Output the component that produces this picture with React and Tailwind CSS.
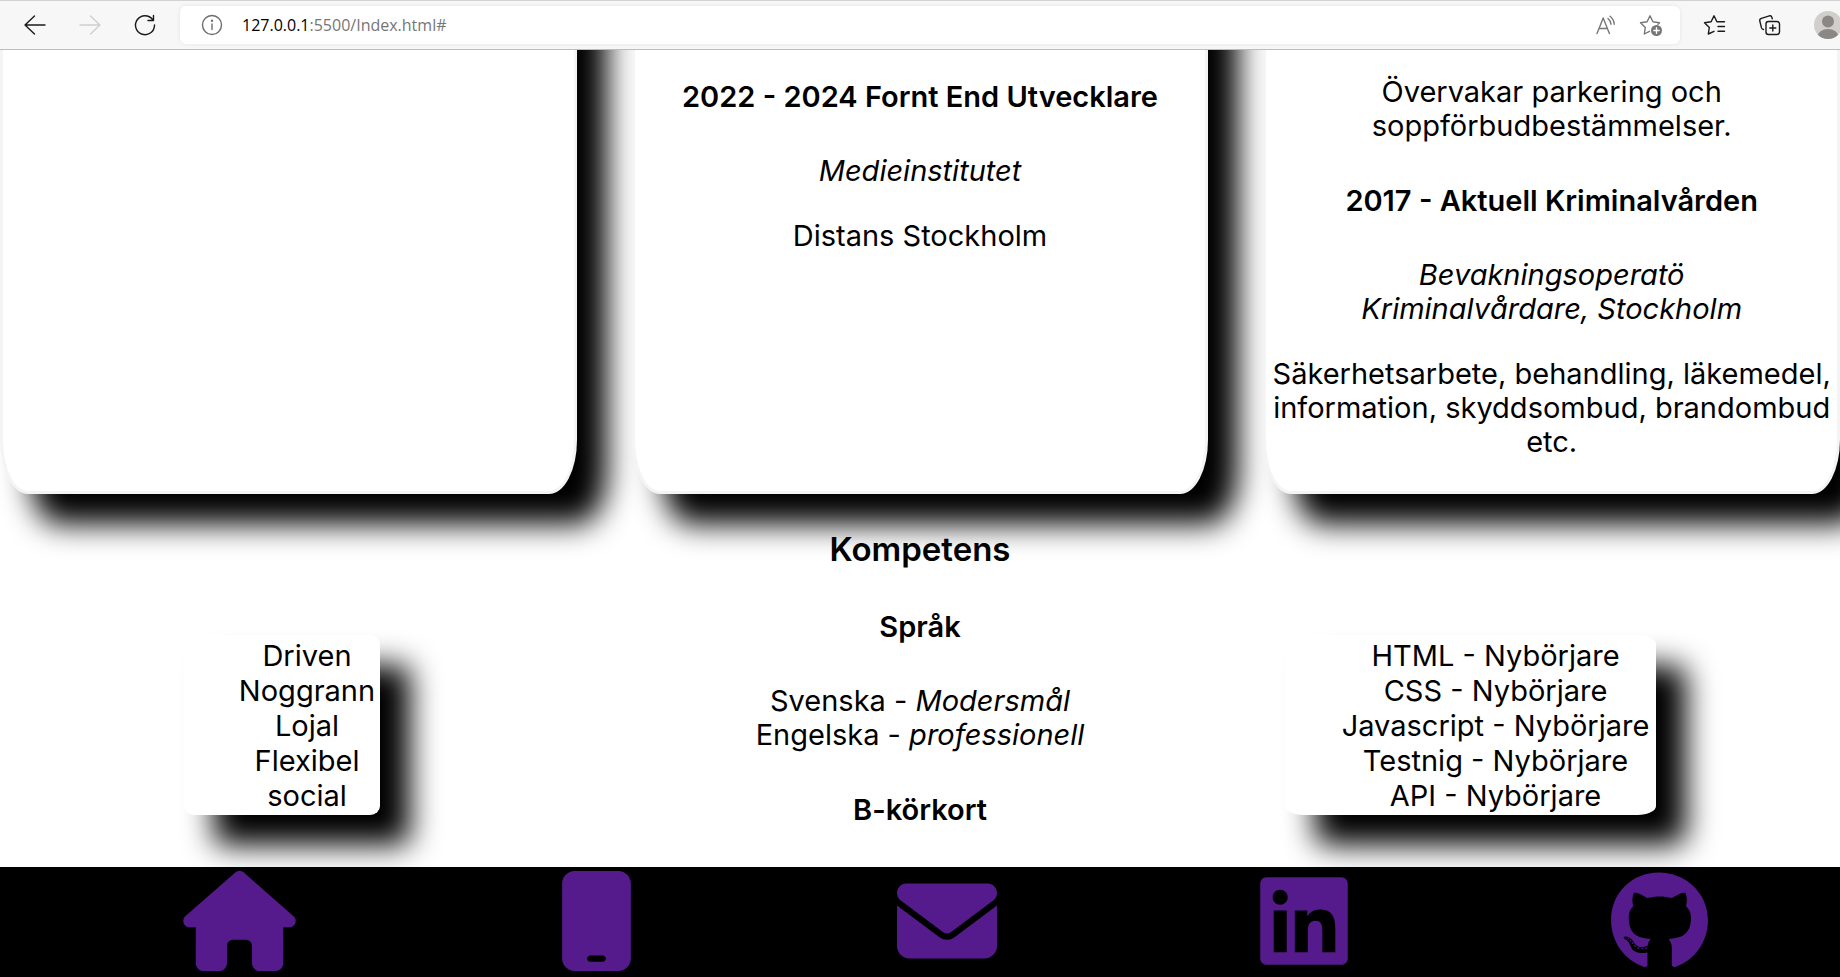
import React from "react";
import { FaHouse, FaEnvelope, FaLinkedin, FaGithub } from "react-icons/fa6";

function Svg({ label, className, children }) {
  return (
    <svg
      viewBox="0 0 24 24"
      role="img"
      aria-label={label}
      className={className}
      fill="none"
      stroke="currentColor"
      strokeWidth="1.4"
      strokeLinecap="round"
      strokeLinejoin="round"
    >
      {children}
    </svg>
  );
}

function BrowserBar() {
  return (
    <header className="relative z-10 flex h-[50px] shrink-0 items-center overflow-hidden border-t border-b border-t-[#d2d2d2] border-b-[#bcbcbc] bg-[#f7f7f7] pl-[23px] font-['Open_Sans',sans-serif]">
      <div className="flex shrink-0 items-center gap-[31px]">
        <button type="button" aria-label="Back" className="text-[#1a1a1a]">
          <Svg className="size-6">
            <path d="M22 12H2M11.500 3 2 12l9.500 9" />
          </Svg>
        </button>
        <button type="button" aria-label="Forward" className="text-[#cfcfcf]">
          <Svg className="size-6">
            <path d="M2 12h20M12.500 3 22 12l-9.500 9" />
          </Svg>
        </button>
        <button type="button" aria-label="Reload" className="text-[#1a1a1a]">
          <Svg className="size-6">
            <path d="M19.600 6.500A9.500 9.500 0 1 0 21.500 12M20.500 2.500V7.500H15" />
          </Svg>
        </button>
      </div>
      <div className="ml-[23px] flex h-[38px] min-w-0 flex-1 items-center rounded-md bg-white pr-[17px] pl-5 shadow-[0_0_4px_rgba(0,0,0,0.08)]">
        <button type="button" aria-label="Site information" className="text-[#6e6e6e]">
          <Svg className="size-6">
            <circle cx="12" cy="12" r="9.500" />
            <path d="M12 11v5.500" />
            <circle cx="12" cy="7.800" r="0.500" fill="currentColor" />
          </Svg>
        </button>
        <a href="#" className="ml-[18px] flex-1 text-base text-[#767676]">
          <span className="text-black">127.0.0.1</span>:5500/Index.html#
        </a>
        <div className="flex items-center gap-[21px] text-[#767676]">
          <button type="button" aria-label="Read aloud">
            <Svg className="size-6">
              <path d="M3 20.500 9.200 5l6.200 15.500M5.200 15.500h8M14 5.500c1.800 1.400 2.800 3.400 3 5.800M16 3.200c2.600 2 4 4.800 4.200 8" />
            </Svg>
          </button>
          <button type="button" aria-label="Add to favourites">
            <Svg className="size-6">
              <path d="M10.500 18.300 5.300 21l1-6.500L1.500 9.800l6.600-1L11 2.800l2.900 6 6.600 1-1.500 1.500" />
              <circle cx="17.500" cy="17.500" r="5.500" fill="currentColor" stroke="none" />
              <path d="M17.500 14.800v5.400M14.800 17.500h5.400" stroke="white" />
            </Svg>
          </button>
        </div>
      </div>
      <div className="-mr-[2px] ml-[23px] flex shrink-0 items-center text-[#1a1a1a]">
        <button type="button" aria-label="Favourites">
          <Svg className="size-6">
            <path d="M11 18.300 5.300 21l1-6.500L1.500 9.800l6.600-1L11 2.800l2.900 6H21.500M15 13.500h6.500M15 18.200h6.500" />
          </Svg>
        </button>
        <button type="button" aria-label="Collections" className="ml-[31px]">
          <Svg className="size-6">
            <rect x="8" y="8.500" width="13.500" height="13" rx="2.500" />
            <path d="M14.800 12v6M11.800 15h6M5.500 16.500c-1 0-1.700-.6-2-1.600L1.800 8c-.3-1.300.3-2.300 1.600-2.700l8-2.500c1.300-.3 2.200.3 2.500 1.500l.4 1.500" />
          </Svg>
        </button>
        <button type="button" aria-label="Profile" className="ml-8">
          <svg viewBox="0 0 28 28" className="size-7">
            <clipPath id="avatar">
              <circle cx="14" cy="14" r="14" />
            </clipPath>
            <g clipPath="url(#avatar)">
              <rect width="28" height="28" fill="#d0cfcc" />
              <circle cx="14" cy="10.500" r="6" fill="#8a8784" />
              <ellipse cx="14" cy="26" rx="10.500" ry="8" fill="#8a8784" />
            </g>
          </svg>
        </button>
      </div>
    </header>
  );
}

function Card({ className = "", children }) {
  return (
    <article
      className={
        "border-3 border-t-0 border-[#f4f4f4] bg-white shadow-[30px_30px_30px_#000] [border-radius:0_0_28px_28px/0_0_54px_54px] " +
        className
      }
    >
      {children}
    </article>
  );
}

function SkillList({ items, className }) {
  return (
    <ul
      className={
        "relative rounded-[5%] bg-white pt-[3px] pr-1 pb-[2px] pl-[54px] leading-[35px] whitespace-nowrap shadow-[30px_30px_30px_#000] " +
        className
      }
    >
      {items.map((item) => (
        <li key={item} className="flex justify-center">
          {item}
        </li>
      ))}
    </ul>
  );
}

function MobileIcon() {
  return (
    <svg viewBox="0 0 384 512" fill="currentColor" className="h-[100px] w-[75px]">
      <path d="M80 0C44.700 0 16 28.700 16 64V448c0 35.300 28.700 64 64 64H304c35.300 0 64-28.700 64-64V64c0-35.300-28.700-64-64-64H80zm80 432h64c8.800 0 16 7.200 16 16s-7.200 16-16 16H160c-8.800 0-16-7.200-16-16s7.200-16 16-16z" />
    </svg>
  );
}

export default function App() {
  return (
    <div className="flex h-screen flex-col overflow-hidden bg-white text-black">
      <BrowserBar />
      <main className="flex min-h-0 flex-1 flex-col overflow-hidden text-center font-['Inter',sans-serif] text-[29px] leading-[34px]">
        <section className="-mt-20 grid shrink-0 grid-cols-3 gap-[55px]">
          <Card />
          <Card className="pt-[110px]">
            <h4 className="mb-10 font-semibold">2022 - 2024 Fornt End Utvecklare</h4>
            <p className="mb-[31px] italic">Medieinstitutet</p>
            <p>Distans Stockholm</p>
          </Card>
          <Card className="pt-[105px] pb-8">
            <p className="mb-[41px]">
              Övervakar parkering och
              <br />
              soppförbudbestämmelser.
            </p>
            <h4 className="mb-10 font-semibold">2017 - Aktuell Kriminalvården</h4>
            <p className="mb-[31px] italic">
              Bevakningsoperatö
              <br />
              Kriminalvårdare, Stockholm
            </p>
            <p>Säkerhetsarbete, behandling, läkemedel, information, skyddsombud, brandombud etc.</p>
          </Card>
        </section>
        <section className="relative shrink-0 pt-[35px]">
          <h2 className="text-[33px] leading-[40px] font-semibold">Kompetens</h2>
          <div className="grid grid-cols-[1fr_auto_1fr] px-[10%] pt-[41px]">
            <SkillList
              className="mt-[25px] w-[196px] self-start justify-self-start"
              items={["Driven", "Noggrann", "Lojal", "Flexibel", "social"]}
            />
            <div>
              <h4 className="mb-10 font-semibold">Språk</h4>
              <p className="mb-[41px]">
                Svenska - <em>Modersmål</em>
                <br />
                Engelska - <em>professionell</em>
              </p>
              <h4 className="font-semibold">B-körkort</h4>
            </div>
            <SkillList
              className="mt-[25px] w-[371px] self-start justify-self-end"
              items={[
                "HTML - Nybörjare",
                "CSS - Nybörjare",
                "Javascript - Nybörjare",
                "Testnig - Nybörjare",
                "API - Nybörjare",
              ]}
            />
          </div>
        </section>
      </main>
      <footer className="relative z-10 shrink-0 bg-black">
        <nav className="flex h-[110px] items-start justify-around pt-1 pl-[51px] text-[#551a8b]">
          <a href="#" aria-label="Hem">
            <FaHouse className="h-[100px] w-[113px]" />
          </a>
          <a href="#" aria-label="Telefon">
            <MobileIcon />
          </a>
          <a href="#" aria-label="E-post">
            <FaEnvelope className="size-[100px]" />
          </a>
          <a href="#" aria-label="LinkedIn">
            <FaLinkedin className="h-[100px] w-[88px]" />
          </a>
          <a href="#" aria-label="GitHub">
            <FaGithub className="h-[100px] w-[97px]" />
          </a>
        </nav>
      </footer>
    </div>
  );
}
